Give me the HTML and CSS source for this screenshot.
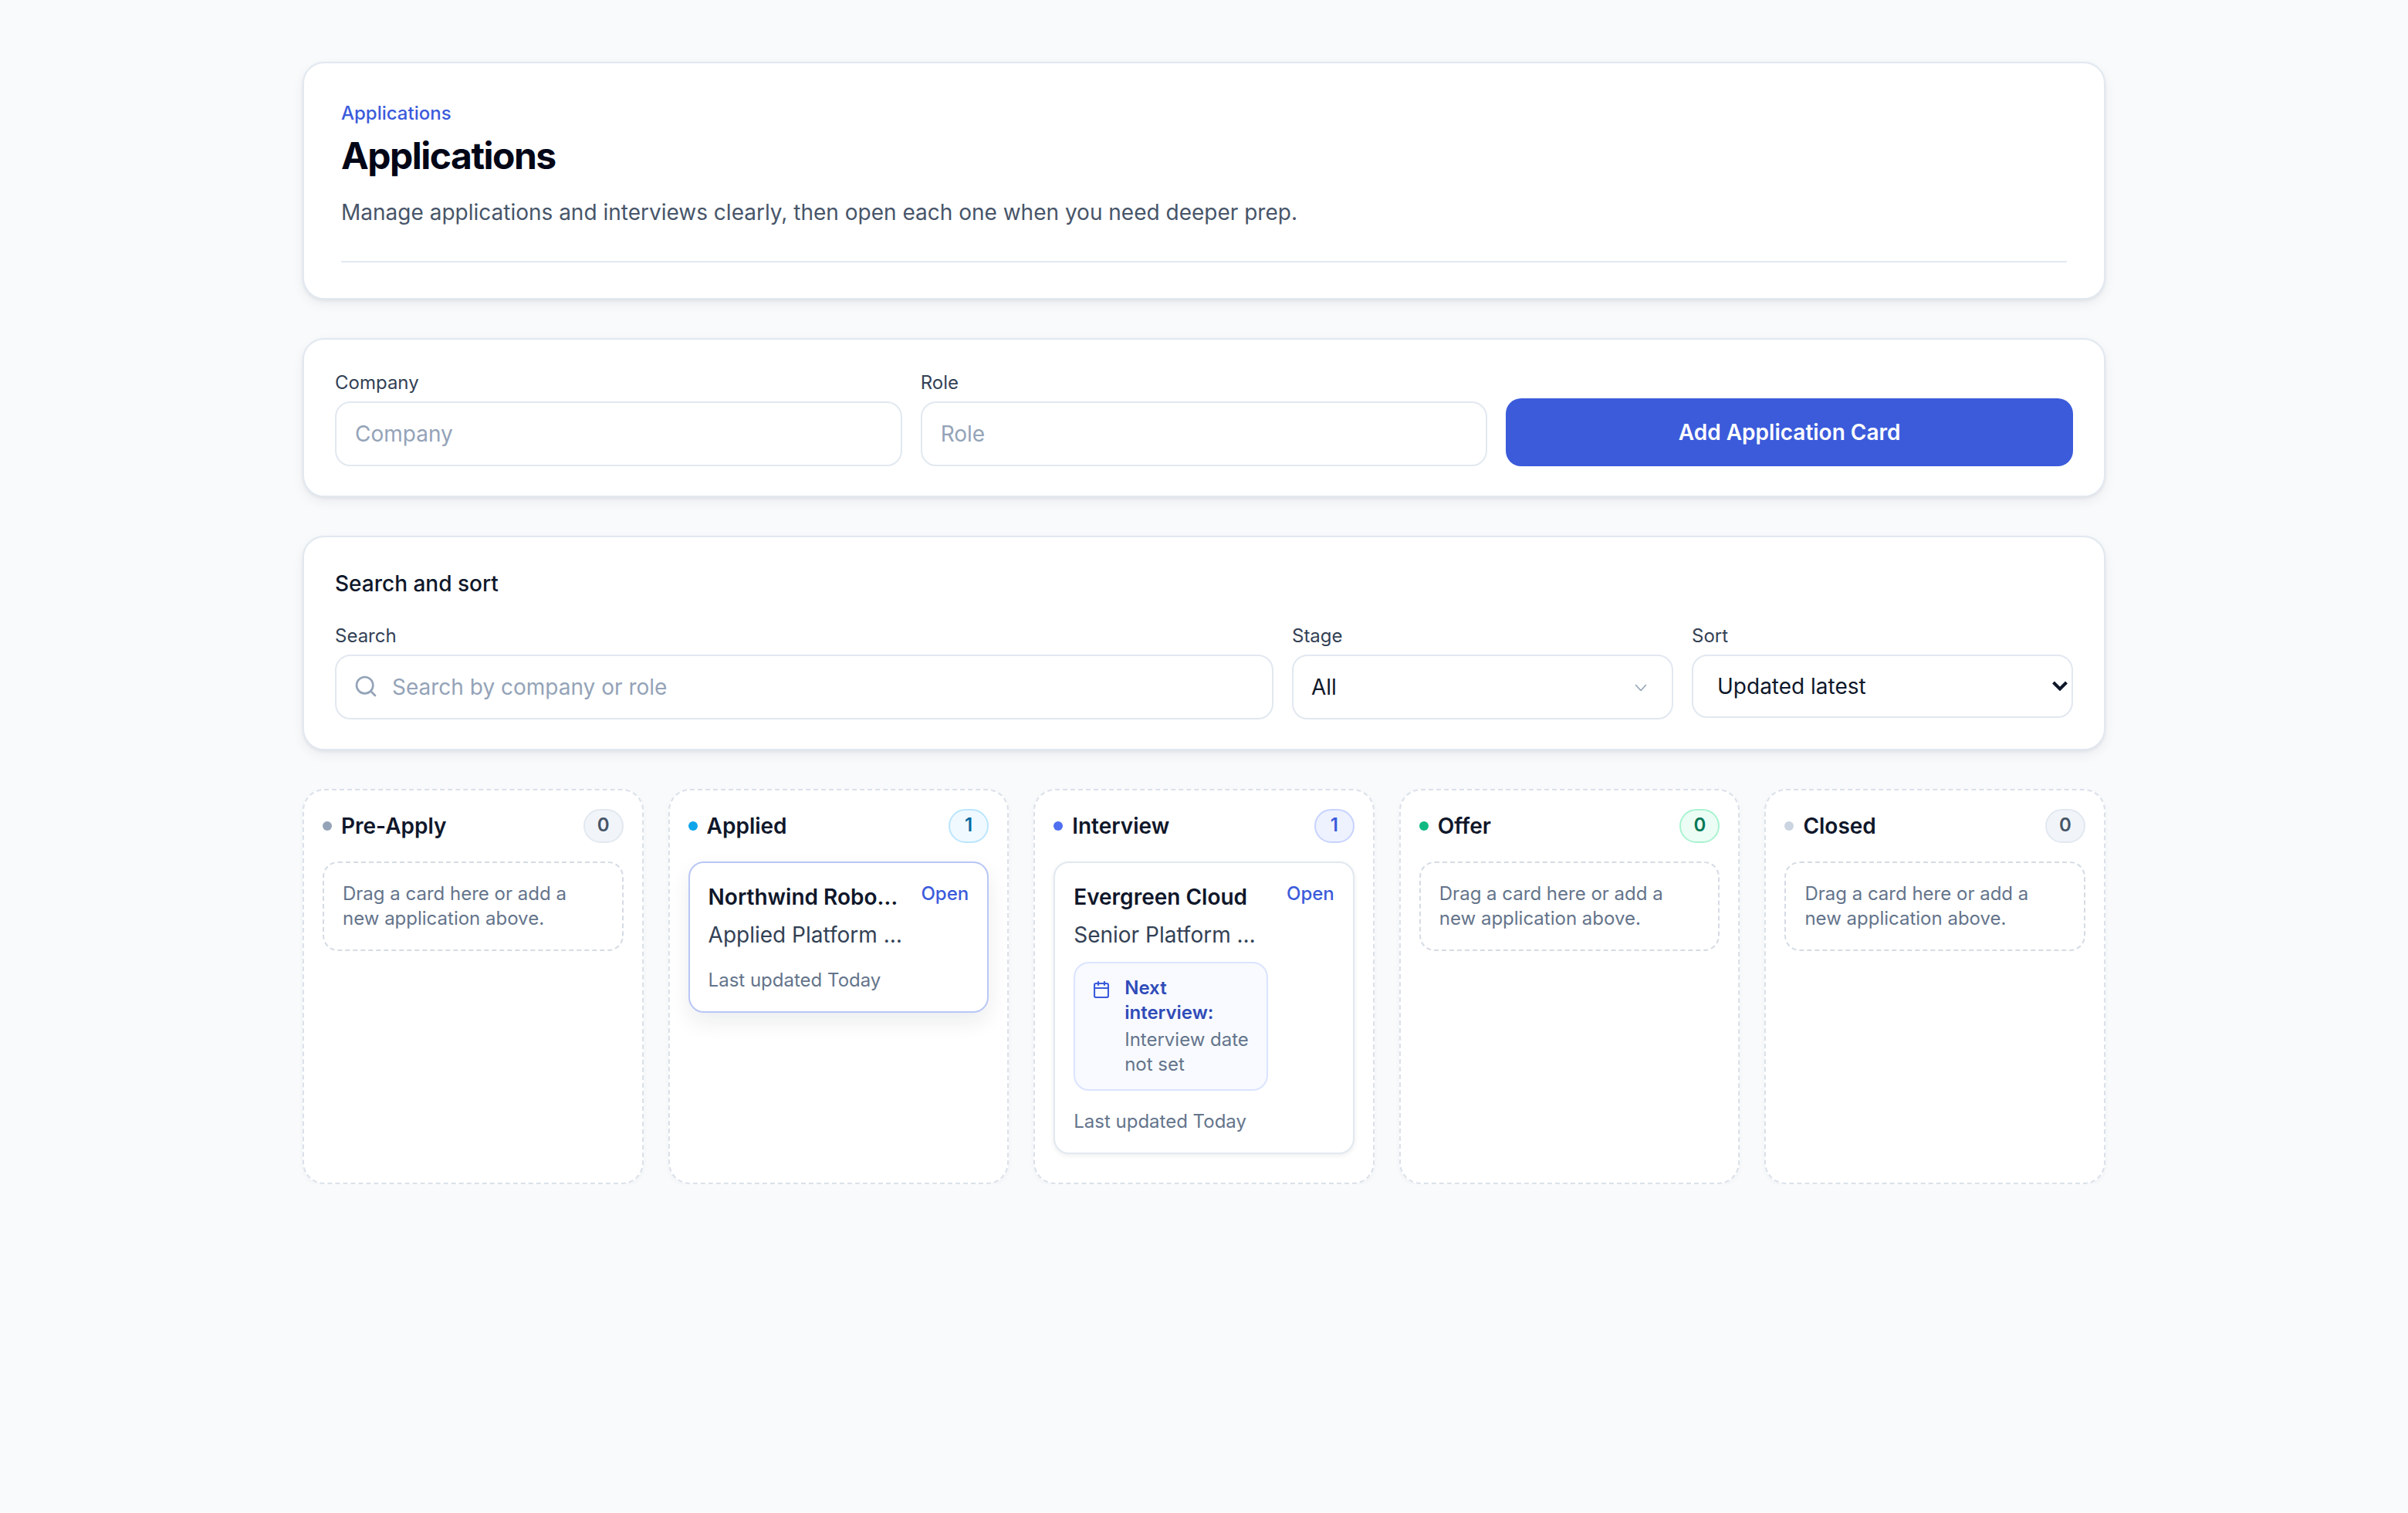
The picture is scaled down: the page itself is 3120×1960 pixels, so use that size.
FILE: index.html
```html
<!DOCTYPE html>
<html lang="en">

<head>
    <meta charset="UTF-8">
    <meta name="viewport" content="width=device-width, initial-scale=1.0">
    <title>Applications</title>
    <link rel="stylesheet" href="styles.css">
</head>

<body>
    <main class="page">

        <section class="panel page-head">
            <p class="eyebrow">Applications</p>
            <h1>Applications</h1>
            <p class="lead">Manage applications and interviews clearly, then open each one when you need deeper prep.</p>
            <hr class="divider">
        </section>

        <section class="panel panel-form">
            <form class="add-form">
                <label class="field">
                    <span class="field-label">Company</span>
                    <input class="input" type="text" placeholder="Company">
                </label>
                <label class="field">
                    <span class="field-label">Role</span>
                    <input class="input" type="text" placeholder="Role">
                </label>
                <button class="btn" type="button">Add Application Card</button>
            </form>
        </section>

        <section class="panel panel-form">
            <h2 class="panel-title">Search and sort</h2>
            <div class="filters">
                <label class="field">
                    <span class="field-label">Search</span>
                    <span class="control">
                        <svg class="search-icon" viewBox="0 0 24 24" fill="none" stroke="currentColor" stroke-width="2" stroke-linecap="round" stroke-linejoin="round">
                            <circle cx="11" cy="11" r="8"></circle>
                            <path d="m21 21-4.3-4.3"></path>
                        </svg>
                        <input class="input input-search" type="text" placeholder="Search by company or role">
                    </span>
                </label>
                <label class="field">
                    <span class="field-label">Stage</span>
                    <span class="control">
                        <select class="input select-stage">
                            <option>All</option>
                        </select>
                        <svg class="chevron-thin" viewBox="0 0 16 10" fill="none" stroke="currentColor" stroke-width="1.6" stroke-linecap="round" stroke-linejoin="round">
                            <path d="M1.5 1.5 8 8.5l6.500-7"></path>
                        </svg>
                    </span>
                </label>
                <label class="field">
                    <span class="field-label">Sort</span>
                    <span class="control">
                        <select class="input select-sort">
                            <option>Updated latest</option>
                        </select>
                        <svg class="chevron-bold" viewBox="0 0 20 13" fill="none" stroke="currentColor" stroke-width="4">
                            <path d="M1.500 2 10 10.500 18.500 2"></path>
                        </svg>
                    </span>
                </label>
            </div>
        </section>

        <section class="board">

            <div class="column">
                <div class="column-head">
                    <span class="dot dot-slate"></span>
                    <h3 class="column-title">Pre-Apply</h3>
                    <span class="count">0</span>
                </div>
                <div class="empty">Drag a card here or add a new application above.</div>
            </div>

            <div class="column">
                <div class="column-head">
                    <span class="dot dot-sky"></span>
                    <h3 class="column-title">Applied</h3>
                    <span class="count count-sky">1</span>
                </div>
                <article class="job job-active">
                    <div class="job-main">
                        <h4 class="job-company">Northwind Robotics</h4>
                        <p class="job-role">Applied Platform Engineer</p>
                        <p class="job-updated">Last updated Today</p>
                    </div>
                    <a class="job-open" href="#">Open</a>
                </article>
            </div>

            <div class="column">
                <div class="column-head">
                    <span class="dot dot-indigo"></span>
                    <h3 class="column-title">Interview</h3>
                    <span class="count count-indigo">1</span>
                </div>
                <article class="job">
                    <div class="job-main">
                        <h4 class="job-company">Evergreen Cloud</h4>
                        <p class="job-role">Senior Platform Engineer</p>
                        <div class="next">
                            <svg class="next-icon" viewBox="2 1 20 22" fill="none" stroke="currentColor" stroke-width="2.200" stroke-linecap="round" stroke-linejoin="round">
                                <path d="M8 2v4"></path>
                                <path d="M16 2v4"></path>
                                <rect x="3" y="4" width="18" height="18" rx="2"></rect>
                                <path d="M3 10h18"></path>
                            </svg>
                            <div>
                                <strong class="next-label">Next interview:</strong>
                                <span class="next-date">Interview date not set</span>
                            </div>
                        </div>
                        <p class="job-updated">Last updated Today</p>
                    </div>
                    <a class="job-open" href="#">Open</a>
                </article>
            </div>

            <div class="column">
                <div class="column-head">
                    <span class="dot dot-green"></span>
                    <h3 class="column-title">Offer</h3>
                    <span class="count count-green">0</span>
                </div>
                <div class="empty">Drag a card here or add a new application above.</div>
            </div>

            <div class="column">
                <div class="column-head">
                    <span class="dot dot-light"></span>
                    <h3 class="column-title">Closed</h3>
                    <span class="count">0</span>
                </div>
                <div class="empty">Drag a card here or add a new application above.</div>
            </div>

        </section>
    </main>
</body>

</html>
```

FILE: styles.css
```css
* {
    box-sizing: border-box;
}

body {
    margin: 0;
    background-color: #f8fafc;
    color: #0f172a;
    font-family: Inter, "Liberation Sans", sans-serif;
}

.page {
    width: 2336px;
    margin: 0 auto;
    padding-top: 80px;
    display: flex;
    flex-direction: column;
    gap: 50px;
}

.panel {
    background-color: #ffffff;
    border: 2px solid #e2e8f0;
    border-radius: 28px;
    box-shadow: 0 2px 4px rgba(15, 23, 42, 0.06), 0 6px 16px rgba(15, 23, 42, 0.06);
}

.page-head {
    padding: 50px 48px 46px;
}

.eyebrow {
    margin: 0;
    font-size: 24px;
    line-height: 30px;
    font-weight: 500;
    color: #3b5bdb;
}

h1 {
    margin: 12px 0 0;
    font-size: 48px;
    line-height: 56px;
    font-weight: 700;
    letter-spacing: -1.5px;
    color: #020617;
}

.lead {
    margin: 25px 0 0;
    font-size: 28px;
    line-height: 40px;
    color: #475569;
}

.divider {
    margin: 43px 0 0;
    border: 0;
    border-top: 2px solid #e2e8f0;
}

.panel-form {
    padding: 38px 40px;
}

.add-form {
    display: grid;
    grid-template-columns: repeat(3, minmax(0, 1fr));
    gap: 24px;
    align-items: end;
}

.field {
    display: flex;
    flex-direction: column;
    gap: 6px;
    min-width: 0;
}

.field-label {
    font-size: 24px;
    line-height: 36px;
    font-weight: 400;
    color: #334155;
}

.input {
    width: 100%;
    height: 84px;
    padding: 0 24px;
    background-color: #ffffff;
    border: 2px solid #e2e8f0;
    border-radius: 20px;
    font-family: inherit;
    font-size: 28px;
    color: #0f172a;
    appearance: none;
}

.input::placeholder {
    color: #94a3b8;
}

.btn {
    height: 88px;
    background-color: #3b5bdb;
    border: 0;
    border-radius: 20px;
    font-family: inherit;
    font-size: 28px;
    font-weight: 600;
    color: #ffffff;
}

.panel-title {
    margin: 0 0 28px;
    font-size: 28px;
    line-height: 44px;
    font-weight: 500;
}

.filters {
    display: grid;
    grid-template-columns: minmax(0, 1fr) 494px 494px;
    gap: 24px;
}

.control {
    position: relative;
    display: block;
}

.input-search {
    padding-left: 72px;
}

.search-icon {
    position: absolute;
    left: 24px;
    top: 25px;
    width: 32px;
    height: 32px;
    color: #94a3b8;
}

.select-stage {
    padding-left: 23px;
}

.select-sort {
    height: 82px;
    padding-left: 31px;
}

.chevron-thin {
    position: absolute;
    left: 444px;
    top: 38px;
    width: 16px;
    height: 10px;
    color: #94a3b8;
}

.chevron-bold {
    position: absolute;
    right: 7px;
    top: 34px;
    width: 20px;
    height: 13px;
    color: #0f172a;
}

.board {
    display: grid;
    grid-template-columns: repeat(5, minmax(0, 1fr));
    gap: 32px;
}

.column {
    min-height: 512px;
    padding: 24px;
    background-color: #ffffff;
    border: 2px dashed #dbe1e9;
    border-radius: 28px;
    box-shadow: 0 2px 6px rgba(15, 23, 42, 0.04);
}

.column-head {
    display: flex;
    align-items: center;
    gap: 12px;
    margin-bottom: 24px;
}

.column-title {
    flex: 1;
    margin: 0;
    font-size: 28px;
    line-height: 36px;
    font-weight: 600;
}

.dot {
    width: 12px;
    height: 12px;
    border-radius: 50%;
}

.dot-slate {
    background-color: #94a3b8;
}

.dot-sky {
    background-color: #0ea5e9;
}

.dot-indigo {
    background-color: #4f6ef0;
}

.dot-green {
    background-color: #10b981;
}

.dot-light {
    background-color: #cbd5e1;
}

.count {
    min-width: 52px;
    height: 44px;
    border: 2px solid #e2e8f0;
    border-radius: 22px;
    background-color: #f1f5f9;
    font-size: 24px;
    line-height: 38px;
    font-weight: 600;
    text-align: center;
    color: #475569;
}

.count-sky {
    background-color: #f0f9ff;
    border-color: #bae6fd;
    color: #0369a1;
}

.count-indigo {
    background-color: #eef2ff;
    border-color: #c7d2fe;
    color: #3b5bdb;
}

.count-green {
    background-color: #ecfdf5;
    border-color: #a7f3d0;
    color: #047857;
}

.empty {
    padding: 24px;
    border: 2px dashed #d5dbe4;
    border-radius: 20px;
    font-size: 24px;
    line-height: 32px;
    color: #64748b;
}

.job {
    display: flex;
    align-items: flex-start;
    gap: 24px;
    padding: 24px;
    background-color: #ffffff;
    border: 2px solid #e2e8f0;
    border-radius: 20px;
    box-shadow: 0 2px 6px rgba(15, 23, 42, 0.08);
}

.job-active {
    border-color: #b9c7f5;
    box-shadow: 0 12px 28px rgba(15, 23, 42, 0.08);
}

.job-main {
    flex: 1;
    min-width: 0;
}

.job-company {
    margin: 0;
    overflow: hidden;
    white-space: nowrap;
    text-overflow: ellipsis;
    font-size: 28px;
    line-height: 40px;
    font-weight: 600;
}

.job-role {
    margin: 10px 0 0;
    overflow: hidden;
    white-space: nowrap;
    text-overflow: ellipsis;
    font-size: 28px;
    line-height: 38px;
    color: #334155;
}

.job-updated {
    margin: 24px 0 0;
    font-size: 24px;
    line-height: 32px;
    color: #64748b;
}

.job-open {
    font-size: 24px;
    line-height: 32px;
    font-weight: 500;
    color: #3b5bdb;
    text-decoration: none;
}

.next {
    display: flex;
    gap: 20px;
    margin-top: 16px;
    padding: 16px 15px 16px 24px;
    background-color: #f8faff;
    border: 2px solid #dbe4ff;
    border-radius: 20px;
}

.next-icon {
    flex: none;
    width: 20px;
    height: 22px;
    margin-top: 7px;
    color: #3b5bdb;
}

.next-label {
    display: block;
    font-size: 24px;
    line-height: 32px;
    font-weight: 600;
    color: #2f4bb8;
}

.next-date {
    display: block;
    margin-top: 3px;
    font-size: 24px;
    line-height: 32px;
    color: #64748b;
}
```
